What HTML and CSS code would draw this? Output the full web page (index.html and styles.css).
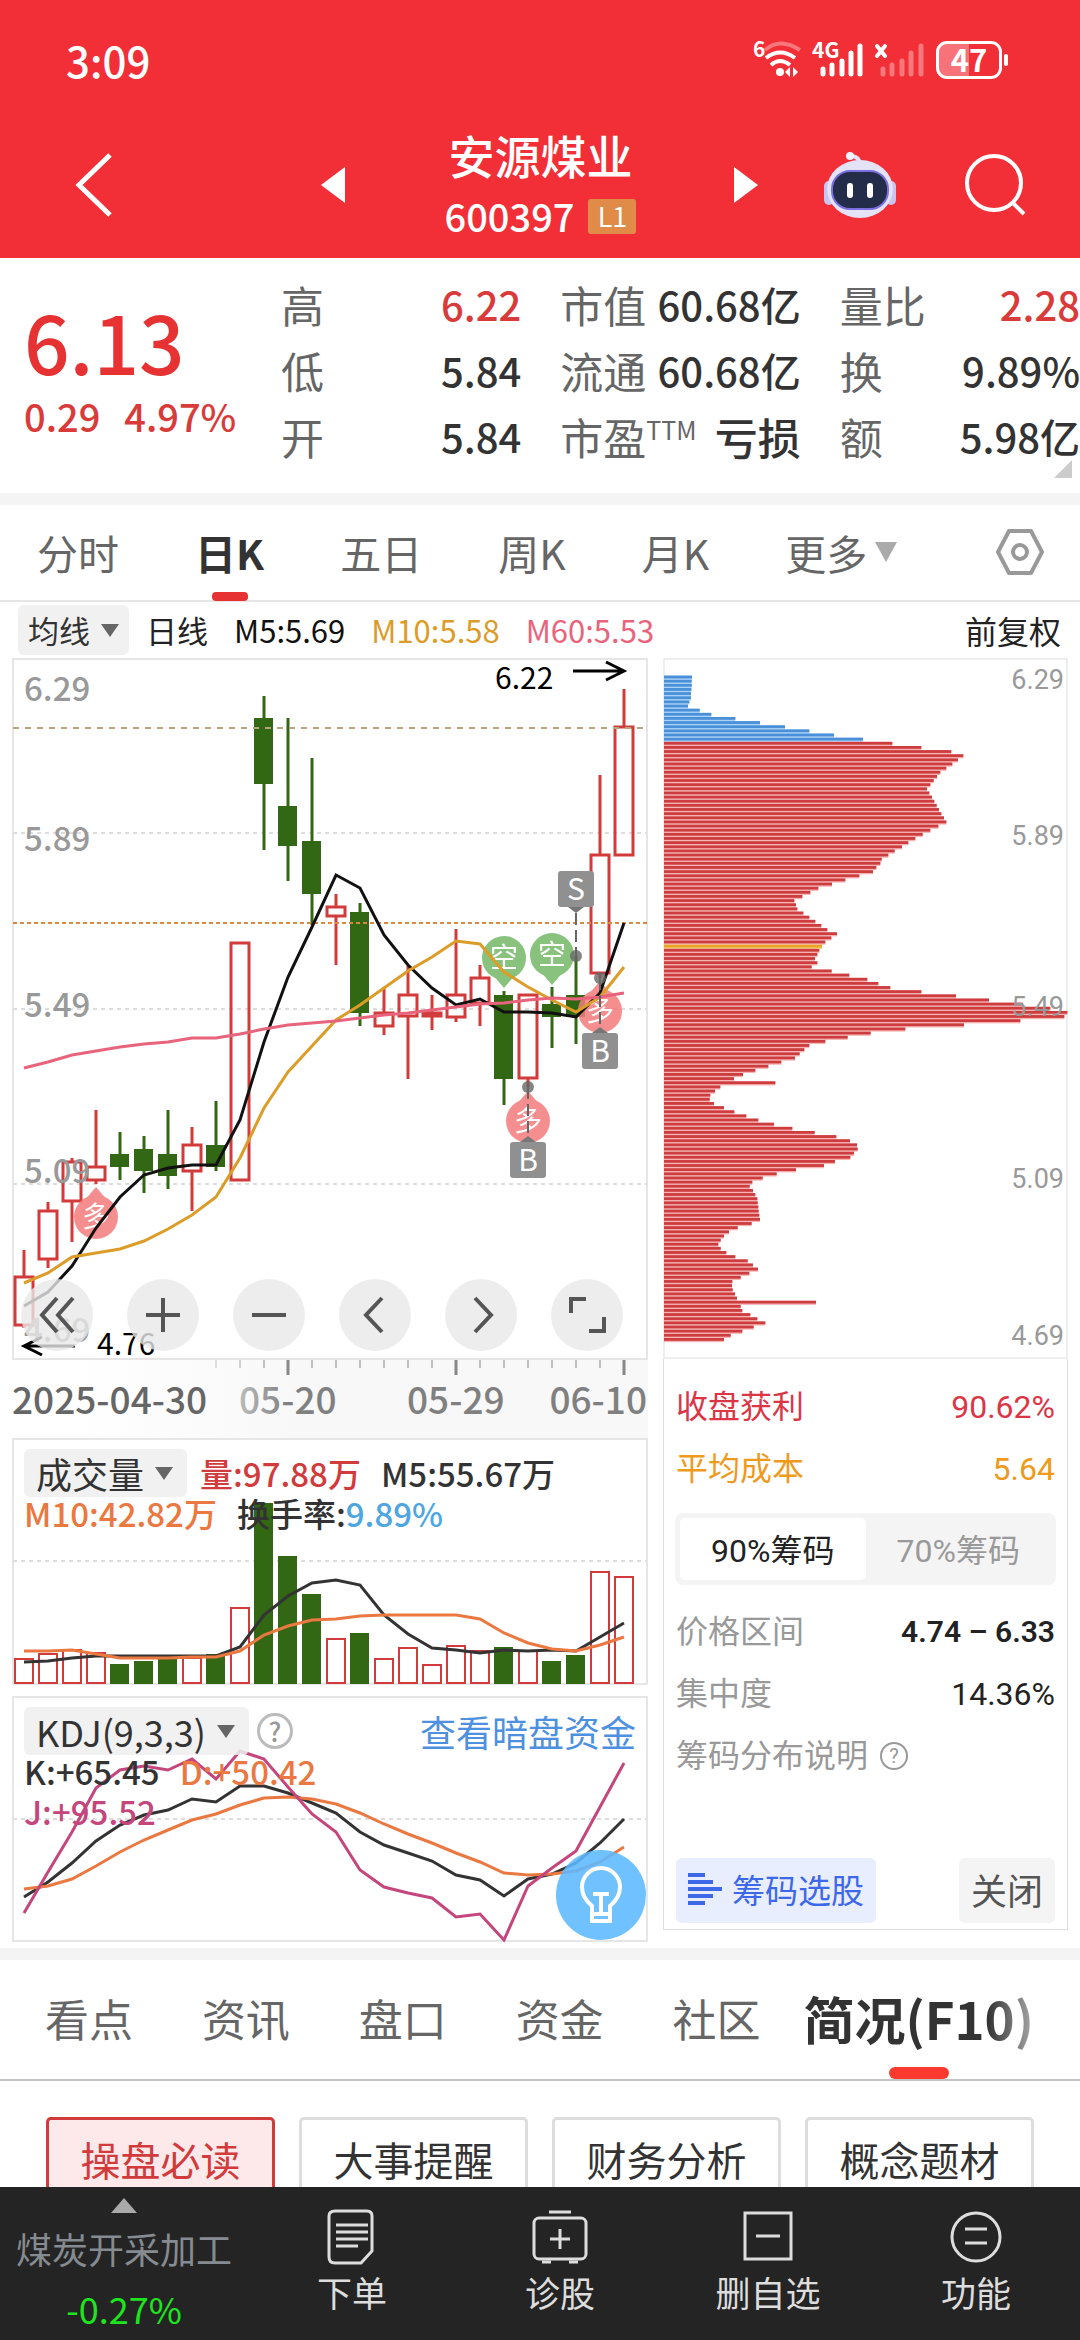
FILE: index.html
```html
<!DOCTYPE html>
<html lang="zh-CN">
<head>
<meta charset="utf-8">
<meta name="viewport" content="width=device-width">
<title>安源煤业 600397</title>
<link rel="stylesheet" href="styles.css">
</head>
<body>
<div class="app">
  <header class="top">
    <div class="status">
      <span class="clock">3:09</span>
      <div class="signals">
        <svg width="48" height="38" viewBox="755 41 48 38" fill="none" stroke="#fff" stroke-width="4">
          <text x="754" y="57" class="tiny">6</text>
          <path d="M766 50q15-13 35 0" stroke-opacity=".35"/>
          <path d="M767 58q14-11 29 0M772 65q9-8 19 0"/>
          <circle cx="781" cy="72" r="4" fill="#fff" stroke="none"/>
          <path d="M786 72l5-5v10zM799 72l-5-5v10z" fill="#fff" stroke="none"/>
        </svg>
        <svg width="52" height="38" viewBox="811 41 52 38" stroke="#fff" stroke-width="5" stroke-linecap="round">
          <text x="811" y="58" class="tiny">4G</text>
          <path d="M822 69v5M831 65v9M841 61v13M850 53v21M859 46v28"/>
        </svg>
        <svg width="52" height="38" viewBox="874 41 52 38" stroke="#fff" stroke-width="5" stroke-linecap="round">
          <path d="M877 46l8 10M885 46l-8 10" stroke-width="4"/>
          <path d="M883 69v5M892 65v9M902 61v13M911 53v21M921 46v28" stroke-opacity=".35"/>
        </svg>
        <div class="battery"><span>47</span></div>
      </div>
    </div>
    <nav class="title-bar">
      <button class="icon-btn" aria-label="返回"><svg width="42" height="68" viewBox="0 0 42 68"><path d="M37 4L6 34l31 30" fill="none" stroke="#fff" stroke-width="5"/></svg></button>
      <button class="icon-btn step" aria-label="上一只"><svg width="24" height="36"><path d="M24 0v36L0 18z" fill="#fff"/></svg></button>
      <div class="title">
        <h1>安源煤业</h1>
        <p><span>600397</span><span class="level">L1</span></p>
      </div>
      <button class="icon-btn step" aria-label="下一只"><svg width="24" height="36"><path d="M0 0v36l24-18z" fill="#fff"/></svg></button>
      <button class="icon-btn" aria-label="智能助手">
        <svg width="72" height="68" viewBox="0 0 72 68">
          <path d="M36 14q0-8-8-9" fill="none" stroke="#e6e4fa" stroke-width="4"/><circle cx="26" cy="5" r="4" fill="#f4f3ff"/>
          <rect x="0" y="30" width="10" height="24" rx="5" fill="#c9c5f0"/><rect x="62" y="30" width="10" height="24" rx="5" fill="#c9c5f0"/>
          <ellipse cx="36" cy="38" rx="33" ry="29" fill="#e4e2f7"/>
          <rect x="8" y="20" width="56" height="38" rx="18" fill="#232c48" stroke="#7b6fe0" stroke-width="2"/>
          <path d="M26 35v9M46 35v9" stroke="#fff" stroke-width="6" stroke-linecap="round"/>
        </svg>
      </button>
      <button class="icon-btn" aria-label="搜索"><svg width="62" height="62" viewBox="0 0 62 62" fill="none" stroke="#fff" stroke-width="4"><circle cx="30" cy="29" r="27"/><path d="M48 48l12 12"/></svg></button>
    </nav>
  </header>

  <main class="content">
    <section class="quote">
      <div class="price"><strong>6.13</strong><p><span>0.29</span><span>4.97%</span></p></div>
      <dl>
        <div><dt>高</dt><dd class="up">6.22</dd></div>
        <div><dt>低</dt><dd>5.84</dd></div>
        <div><dt>开</dt><dd>5.84</dd></div>
      </dl>
      <dl>
        <div><dt>市值</dt><dd>60.68亿</dd></div>
        <div><dt>流通</dt><dd>60.68亿</dd></div>
        <div><dt>市盈<sup>TTM</sup></dt><dd class="word">亏损</dd></div>
      </dl>
      <dl>
        <div><dt>量比</dt><dd class="up">2.28</dd></div>
        <div><dt>换</dt><dd>9.89%</dd></div>
        <div><dt>额</dt><dd>5.98亿</dd></div>
      </dl>
      <svg class="corner" width="18" height="18"><path d="M18 0v18H0z" fill="#ccc"/></svg>
    </section>

    <nav class="periods">
      <button>分时</button>
      <button class="on">日K</button>
      <button>五日</button>
      <button>周K</button>
      <button>月K</button>
      <button class="more">更多<svg width="22" height="20"><path d="M0 0h22L11 20z" fill="#aaa"/></svg></button>
      <button class="gear" aria-label="设置"><svg width="50" height="48" viewBox="0 0 50 48" fill="none" stroke="#999" stroke-width="4" stroke-linejoin="round"><path d="M14 3h22l11 21-11 21H14L3 24z"/><circle cx="25" cy="24" r="7"/></svg></button>
    </nav>

    <div class="ma-row">
      <button class="pill small">均线<svg width="18" height="13"><path d="M0 0h18L9 13z" fill="#666"/></svg></button>
      <span>日线</span>
      <span class="m5">M5:5.69</span>
      <span class="m10">M10:5.58</span>
      <span class="m60">M60:5.53</span>
      <button class="adjust">前复权</button>
    </div>

    <section class="charts">
      <div class="chart-col">
        <div class="plot">
          <svg id="kline" class="plot-svg" viewBox="12 658 636 702"></svg>
          <div class="zoom-bar">
            <button aria-label="收起"><svg viewBox="0 0 40 40"><path d="M20 3L5 20l15 17M36 3L21 20l15 17"/></svg></button>
            <button aria-label="放大"><svg viewBox="0 0 40 40"><path d="M3 20h34M20 3v34"/></svg></button>
            <button aria-label="缩小"><svg viewBox="0 0 40 40"><path d="M3 20h34"/></svg></button>
            <button aria-label="左移"><svg viewBox="0 0 40 40"><path d="M27 3L11 20l16 17"/></svg></button>
            <button aria-label="右移"><svg viewBox="0 0 40 40"><path d="M14 3l16 17-16 17"/></svg></button>
            <button aria-label="全屏"><svg viewBox="0 0 40 40"><path d="M4 18V4h15M37 22v14H22"/></svg></button>
          </div>
        </div>
        <svg id="axis" class="plot-svg" viewBox="12 1360 636 78"></svg>
        <div class="plot volume">
          <svg id="volume" class="plot-svg" viewBox="12 1438 636 247"></svg>
          <div class="legend">
            <div class="legend-row"><button class="pill">成交量<svg width="18" height="13"><path d="M0 0h18L9 13z" fill="#666"/></svg></button><span class="vol">量:97.88万</span><span>M5:55.67万</span></div>
            <div class="legend-row"><span class="orange">M10:42.82万</span><span>换手率:<b>9.89%</b></span></div>
          </div>
        </div>
        <div class="plot kdj">
          <svg id="kdj" class="plot-svg" viewBox="12 1696 636 246"></svg>
          <div class="legend">
            <div class="legend-row"><button class="pill">KDJ(9,3,3)<svg width="18" height="13"><path d="M0 0h18L9 13z" fill="#666"/></svg></button><button class="help big" aria-label="指标说明">?</button><a class="fund" href="#fund">查看暗盘资金</a></div>
            <div class="legend-row"><span>K:+65.45</span><span class="orange">D:+50.42</span></div>
            <div class="legend-row"><span class="purple">J:+95.52</span></div>
          </div>
          <button class="bulb" aria-label="提示"><svg width="44" height="60" viewBox="0 0 44 60" fill="none" stroke="#fff" stroke-width="4"><path d="M13 41C7 36 3 30 3 22a19 19 0 0 1 38 0c0 8-4 14-10 19v15H13zM13 49h18M14 29h16M22 29v20"/></svg></button>
        </div>
      </div>

      <aside class="chips">
        <svg id="chips" class="plot-svg" viewBox="663 658 405 701"></svg>
        <div class="chip-info">
          <p class="row profit"><span>收盘获利</span><span>90.62%</span></p>
          <p class="row cost"><span>平均成本</span><span>5.64</span></p>
          <div class="segment"><button class="on">90%筹码</button><button>70%筹码</button></div>
          <p class="row"><span>价格区间</span><b>4.74 – 6.33</b></p>
          <p class="row"><span>集中度</span><em>14.36%</em></p>
          <p class="row note"><span>筹码分布说明</span><button class="help" aria-label="筹码分布说明">?</button></p>
          <div class="actions">
            <button class="pick"><svg width="34" height="34" viewBox="0 0 34 34" stroke="#3d68e8" stroke-width="4"><path d="M0 3h17M0 10h25M0 17h34M0 24h25M0 31h17"/></svg>筹码选股</button>
            <button class="close">关闭</button>
          </div>
        </div>
      </aside>
    </section>

    <nav class="sections">
      <button>看点</button><button>资讯</button><button>盘口</button><button>资金</button><button>社区</button><button class="on">简况(F10)</button>
    </nav>
    <div class="topics">
      <button class="on">操盘必读</button><button>大事提醒</button><button>财务分析</button><button>概念题材</button>
    </div>
  </main>

  <footer class="tools">
    <a class="sector" href="#sector"><svg width="26" height="15"><path d="M0 15h26L13 0z" fill="#aaa"/></svg><span>煤炭开采加工</span><b>-0.27%</b></a>
    <button><svg viewBox="0 0 56 56"><path d="M11 2h32q5 0 5 5v35l-11 12H11q-6 0-6-6V7q0-5 6-5zM12 16h32M12 23h32M12 30h32M12 37h22"/></svg>下单</button>
    <button><svg viewBox="0 0 56 56"><rect x="2" y="9" width="52" height="41" rx="5"/><path d="M17 3h22M28 20v20M18 30h20M10 53h9M37 53h9"/></svg>诊股</button>
    <button><svg viewBox="0 0 56 56"><path d="M5 4h46v46H5zM16 27h24"/></svg>删自选</button>
    <button><svg viewBox="0 0 56 56"><circle cx="28" cy="28" r="24"/><path d="M17 20h22M17 34h22"/></svg>功能</button>
  </footer>
</div>
<script src="charts.js"></script>
</body>
</html>
```
FILE: styles.css
```css
* { box-sizing: border-box; margin: 0; }
body { font-family: "Noto Sans CJK SC", "Noto Sans", sans-serif; color: #333; background: #fff; }
button { font: inherit; color: inherit; background: none; border: 0; padding: 0; }
a { color: inherit; text-decoration: none; }
svg { display: block; flex: none; }
p { display: flex; }
.app { height: 100vh; display: flex; flex-direction: column; }

/* header */
.top { background: #f22f37; color: #fff; flex: none; }
.status { display: flex; justify-content: space-between; align-items: center; height: 116px; padding: 3px 78px 0 66px; }
.status svg { overflow: visible; }
.clock { font-size: 42px; font-weight: 500; }
.signals { display: flex; align-items: center; gap: 10px; }
.tiny { font: 700 21px "Noto Sans CJK SC", sans-serif; fill: #fff; stroke: none; }
.battery { position: relative; width: 66px; height: 38px; border: 3px solid #fff; border-radius: 11px; background: linear-gradient(90deg, #f77379 50%, transparent 50%); font-size: 31px; font-weight: 700; line-height: 30px; text-align: center; }
.battery::after { content: ""; position: absolute; right: -9px; top: 10px; width: 4px; height: 12px; border-radius: 2px; background: #fff; }
.title-bar { display: grid; grid-template-columns: 242px 38px 1fr 96px 140px 62px; align-items: center; height: 142px; padding: 0 54px 4px 73px; }
.icon-btn { justify-self: start; }
.icon-btn.step { margin-left: 6px; }
.title { justify-self: center; text-align: center; }
h1 { font-size: 46px; font-weight: 500; line-height: 62px; }
.title p { align-items: center; justify-content: center; gap: 14px; font-size: 38px; font-weight: 500; line-height: 62px; }
.level { width: 48px; height: 35px; border-radius: 3px; background: #e08c48; font-size: 27px; font-weight: 400; line-height: 34px; }

/* quote */
.content { flex: 1; min-height: 0; overflow: hidden; }
.quote { position: relative; display: grid; grid-template-columns: 218px 1fr 1fr 1fr; gap: 39px; padding: 13px 0 24px 24px; border-bottom: 12px solid #f4f4f4; }
.price { color: #e63232; padding-top: 10px; }
.price strong { display: block; font-size: 80px; line-height: 118px; font-weight: 500; }
.price p { gap: 24px; font-size: 38px; font-weight: 500; line-height: 34px; color: #d93a3a; }
.quote dl > div { display: flex; justify-content: space-between; align-items: center; height: 66px; white-space: nowrap; }
.quote dt { font-size: 43px; line-height: 66px; color: #666; }
.quote dd { font-size: 40px; font-weight: 500; line-height: 66px; color: #333; }
.quote .word { font-size: 43px; }
.quote .up { color: #d93a3a; }
.quote sup { font-size: 25px; line-height: 20px; }
.corner { position: absolute; right: 8px; bottom: 15px; }

/* period tabs */
.periods { display: flex; gap: 76px; align-items: center; height: 97px; padding: 0 35px 0 37px; border-bottom: 2px solid #e6e6e6; font-size: 41px; line-height: 60px; color: #666; }
.periods button { height: 96px; display: flex; align-items: center; padding-bottom: 2px; }
.periods .more { gap: 8px; }
.periods .gear { margin-left: auto; }
.periods .on { position: relative; color: #333; font-weight: 700; }
.periods .on::after { content: ""; position: absolute; left: 50%; bottom: 0; width: 36px; height: 9px; margin-left: -18px; border-radius: 4px; background: #e63232; }
.ma-row { display: flex; align-items: center; gap: 26px; height: 56px; padding: 0 19px 0 18px; font-size: 31px; line-height: 50px; color: #222; }
.ma-row .pill { margin-right: -9px; }
.m5 { color: #111; }
.m10 { color: #dc9c28; }
.m60 { color: #e8647c; }
.adjust { margin-left: auto; font-size: 32px; }
.pill { display: flex; align-items: center; gap: 11px; height: 48px; padding: 0 14px 0 12px; border-radius: 6px; background: rgba(238, 238, 238, .85); font-size: 36px; line-height: 48px; color: #333; }
.pill.small { height: 50px; padding: 0 10px; font-size: 31px; }

/* charts */
.charts { display: grid; grid-template-columns: 636fr 405fr; gap: 15px; align-items: start; padding: 0 12px 6px; border-bottom: 12px solid #f4f4f4; }
.plot { position: relative; }
.plot-svg { width: 100%; height: auto; }
.plot-svg text { font-family: "Noto Sans CJK SC", sans-serif; }
.kdj { margin-top: 11px; }
.zoom-bar { position: absolute; left: 9px; right: 25px; bottom: 9px; display: flex; justify-content: space-between; }
.zoom-bar button { width: 72px; height: 72px; border-radius: 50%; background: rgba(232, 232, 232, .8); display: grid; place-items: center; }
.zoom-bar svg { width: 40px; height: 40px; fill: none; stroke: #555; stroke-width: 4; }
.legend { position: absolute; inset: 11px 12px auto; font-size: 33px; font-weight: 500; line-height: 40px; white-space: nowrap; }
.legend-row { display: flex; align-items: center; gap: 20px; }
.legend-row:first-child { margin-bottom: -4px; }
.legend b { font-weight: 500; color: #4da6e0; }
.legend .vol { color: #d13b3b; margin-left: -7px; }
.legend .orange { color: #ea7840; }
.legend .purple { color: #c4467c; }
.legend .pill, .fund { font-weight: 400; }
.kdj .help { margin-left: -12px; }
.fund { margin-left: auto; font-size: 36px; color: #4d90e0; }
.help { width: 28px; height: 28px; border: 2px solid #999; border-radius: 50%; font-size: 20px; line-height: 22px; color: #999; }
.help.big { width: 36px; height: 36px; border: 3px solid #bbb; font-size: 26px; line-height: 28px; }
.bulb { position: absolute; right: 2px; bottom: 2px; width: 90px; height: 90px; border-radius: 50%; background: rgba(92, 184, 255, .88); display: grid; place-items: center; }

/* chip distribution */
.chips { font-family: Roboto, "Noto Sans CJK SC", sans-serif; font-size: 32px; }
.plot-svg .chip-label { font-family: Roboto, sans-serif; }
.chip-info { border: 1px solid #ddd; border-top: 0; padding: 17px 11px 6px; height: 571px; display: flex; flex-direction: column; }
.row { justify-content: space-between; align-items: center; line-height: 62px; padding: 0 1px; color: #999; }
.row b { color: #222; font-size: 30px; font-weight: 600; }
.row em { color: #222; font-style: normal; }
.profit { color: #dc3545; }
.cost { color: #ee9a1c; }
.note { justify-content: flex-start; gap: 12px; }
.segment { display: flex; flex: none; height: 72px; margin: 13px 0 16px; padding: 5px; border-radius: 8px; background: #f4f4f4; color: #999; }
.segment button { flex: 1; padding-bottom: 3px; border-radius: 5px; }
.segment .on { background: #fff; color: #222; }
.actions { display: flex; justify-content: space-between; margin-top: auto; padding: 0 1px; }
.actions button { display: flex; align-items: center; height: 65px; padding: 0 12px 3px; border-radius: 6px; }
.pick { gap: 10px; background: #e8eefe; color: #3d68e8; font-size: 33px; }
.close { background: #f4f4f4; color: #555; font-size: 36px; }

/* lower tabs */
.sections { display: flex; align-items: center; height: 121px; padding: 0 46px 0 45px; justify-content: space-between; border-bottom: 2px solid #c4c4c4; font-size: 44px; color: #666; }
.sections button { height: 119px; padding-bottom: 4px; }
.sections .on { position: relative; margin-left: -26px; font-size: 51px; font-weight: 700; color: transparent; background: linear-gradient(90deg, #333 80%, #aaa) text; }
.sections .on::after { content: ""; position: absolute; left: 50%; bottom: 0; width: 60px; height: 12px; margin-left: -30px; border-radius: 6px; background: #fb3a2f; }
.topics { display: grid; grid-template-columns: repeat(4, 1fr); gap: 24px; padding: 36px 46px; }
.topics button { height: 86px; padding-bottom: 2px; border: 3px solid #ddd; border-radius: 5px; font-size: 40px; color: #333; }
.topics .on { border-color: #d13b3b; background: #fde9e9; color: #d13b3b; }

/* bottom bar */
.tools { flex: none; display: grid; grid-template-columns: 248fr repeat(4, 208fr); height: 153px; background: #242424; color: #ddd; font-size: 35px; line-height: 42px; text-align: center; }
.tools > * { display: flex; flex-direction: column; align-items: center; }
.tools button { padding-top: 22px; gap: 6px; }
.tools button svg { width: 56px; height: 56px; fill: none; stroke: #ddd; stroke-width: 3; }
.sector { padding-top: 11px; color: #858b90; font-size: 36px; }
.sector span { margin-top: 14px; }
.sector b { margin-top: 18px; font-weight: 400; color: #1ee61e; }
```
FILE: charts.js
```js
const RED = '#d13b3b', GREEN = '#326714';
const x = i => 24 + i * 24;
const line = (ys, color) =>
  `<polyline fill="none" stroke="${color}" stroke-width="3" points="${ys.map((y, i) => `${x(i)},${y}`).join(' ')}"/>`;
const grid = (y, color = '#ddd', w = 2, dash = '4 4') =>
  `<path d="M13 ${y}H647" stroke="${color}" stroke-width="${w}" stroke-dasharray="${dash}"/>`;
const frame = (y, h) => `<rect x="13" y="${y}" width="634" height="${h}" fill="none" stroke="#e6e6e6" stroke-width="2"/>`;
const label = (s, px, y, size, color, extra = '') =>
  `<text x="${px}" y="${y}" font-size="${size}" fill="${color}" ${extra}>${s}</text>`;
const put = (id, html) => { document.getElementById(id).innerHTML = html; };

// up?, high, body top, body bottom, low
const candles = [
  [1,1250,1277,1325,1328],[1,1202,1211,1259,1268],[1,1158,1162,1201,1242],[1,1110,1167,1180,1184],
  [0,1132,1154,1167,1180],[0,1136,1149,1171,1193],[0,1110,1154,1176,1189],[1,1127,1145,1171,1211],
  [0,1101,1145,1167,1171],[1,943,943,1180,1180],[0,696,718,784,850],[0,718,806,846,881],
  [0,758,841,894,925],[1,894,907,916,965],[0,903,912,1013,1026],[1,987,1013,1026,1035],
  [1,966,995,1016,1079],[1,995,1013,1016,1030],[1,929,995,1017,1022],[1,965,978,1003,1026],
  [0,991,995,1079,1105],[1,995,995,1078,1087],[0,987,1004,1017,1048],[0,956,995,1017,1044],
  [1,775,855,973,978],[1,689,727,855,855]
];
const candle = ([up, hi, top, bot, lo], i) => up
  ? `<path d="M${x(i)} ${hi}V${top}M${x(i)} ${bot}V${lo}M${x(i) - 9} ${top}h18V${bot}h-18z" fill="none" stroke="${RED}" stroke-width="3"/>`
  : `<path d="M${x(i)} ${hi}V${lo}" stroke="${GREEN}" stroke-width="3"/><rect x="${x(i) - 10}" y="${top}" width="19" height="${bot - top}" fill="${GREEN}"/>`;

const ma5 = [1306,1292,1266,1228,1197,1175,1168,1165,1165,1120,1042,977,927,875,888,935,965,988,1005,999,1012,1012,1013,1017,993,923];
const ma10 = [1283,1273,1257,1253,1249,1241,1229,1215,1197,1158,1108,1072,1046,1020,1005,988,971,957,941,944,972,987,1000,1012,997,967];
const ma60 = [1068,1062,1055,1051,1047,1044,1042,1038,1038,1034,1029,1025,1023,1021,1018,1015,1013,1010,1007,1004,1003,1000,998,999,997,993];

const pin = (cx, cy, ch, up) => {
  const color = up ? '#f47c7c' : '#74b866';
  const t = up ? -1 : 1;
  return `<g opacity=".85"><circle cx="${cx}" cy="${cy}" r="22" fill="${color}"/><path d="M${cx - 12} ${cy + t * 16}L${cx} ${cy + t * 30}L${cx + 12} ${cy + t * 16}z" fill="${color}"/>` +
    label(ch, cx, cy + 10, 28, '#fff', 'text-anchor="middle"') + '</g>';
};
const badge = (cx, y, ch, below) =>
  `<path d="M${cx - 8} ${below ? y : y + 36}h16l-8 ${below ? -6 : 6}z" fill="#777"/><rect x="${cx - 18}" y="${y}" width="36" height="36" rx="3" fill="#909090"/>` +
  label(ch, cx, y + 29, 30, '#fff', 'text-anchor="middle"');
const leader = (cx, a, b) => `<path d="M${cx} ${a}V${b}" stroke="#666" stroke-width="2" stroke-dasharray="12 5"/>`;
const dot = (cx, cy) => `<circle cx="${cx}" cy="${cy}" r="6" fill="#666" fill-opacity=".8"/>`;

put('kline',
  frame(659, 700) + grid(833) + grid(1009) + grid(1184) +
  candles.map(candle).join('') +
  grid(728, '#b5a57c', 2, '6 6') + grid(923, '#dd8840', 2, '4 3') +
  [['6.29', 701], ['5.89', 851], ['5.49', 1017], ['5.09', 1183], ['4.69', 1342]].map(([s, y]) => label(s, 24, y, 33, '#999', 'font-weight="500"')).join('') +
  pin(504, 958, '空', 0) + pin(552, 955, '空', 0) + pin(600, 1011, '多', 1) + pin(528, 1121, '多', 1) + pin(96, 1217, '多', 1) +
  line(ma5, '#111') + line(ma10, '#dc9c28') + line(ma60, '#e8647c') +
  dot(576, 956) + dot(600, 978) + dot(528, 1087) +
  leader(576, 913, 956) + leader(600, 978, 1030) + leader(528, 1087, 1140) +
  badge(576, 871, 'S', 0) + badge(600, 1033, 'B', 1) + badge(528, 1142, 'B', 1) +
  label('6.22', 495, 689, 30, '#000') + label('4.76', 97, 1355, 30, '#000') +
  '<path d="M573 671h50M606 662l18 9-18 9M75 1346H25M42 1337l-18 9 18 9" fill="none" stroke="#000" stroke-width="3"/>');

let ticks = '';
for (let i = 8; i < 26; i++) {
  const major = [11, 18, 25].includes(i);
  ticks += `<path d="M${x(i)} 1360v${major ? 15 : 8}" stroke="#888" stroke-width="${major ? 3 : 1}" opacity="${Math.min(1, (i - 6) / 4)}"/>`;
}
put('axis',
  '<defs><linearGradient id="fade"><stop offset=".1" stop-color="#fff"/><stop offset=".45" stop-color="#f8f8f8"/></linearGradient>' +
  '<linearGradient id="date"><stop offset="0" stop-color="#bbb"/><stop offset=".5" stop-color="#808080"/></linearGradient></defs>' +
  '<rect x="12" y="1360" width="636" height="78" fill="url(#fade)"/>' + ticks +
  label('2025-04-30', 12, 1414, 37, '#666', 'font-weight="500"') + label('05-20', 239, 1414, 37, 'url(#date)', 'font-weight="500"') +
  label('05-29', 407, 1414, 37, '#808080', 'font-weight="500"') + label('06-10', 647, 1414, 37, '#808080', 'font-weight="500" text-anchor="end"'));

const volTop = [1659,1654,1650,1653,1664,1661,1658,1658,1654,1608,1503,1556,1594,1639,1633,1659,1648,1665,1646,1651,1647,1651,1661,1655,1572,1577];
const vol5 = [1662,1661,1658,1656,1656,1656,1656,1656,1656,1647,1615,1596,1583,1580,1585,1615,1634,1648,1650,1653,1650,1651,1650,1651,1637,1623];
const vol10 = [1651,1651,1650,1654,1658,1658,1658,1657,1657,1651,1635,1626,1620,1619,1616,1615,1615,1615,1615,1619,1633,1643,1649,1651,1645,1637];
put('volume',
  frame(1439, 245) + grid(1561) +
  volTop.map((y, i) => candles[i][0]
    ? `<rect x="${x(i) - 9}" y="${y}" width="18" height="${1683 - y}" fill="#fff" stroke="${RED}" stroke-width="2"/>`
    : `<rect x="${x(i) - 10}" y="${y}" width="19" height="${1684 - y}" fill="${GREEN}"/>`).join('') +
  line(vol5, '#333') + line(vol10, '#ea7840'));

const k = [1897,1882,1863,1841,1825,1815,1810,1799,1802,1786,1786,1793,1803,1813,1832,1845,1853,1861,1875,1880,1896,1879,1874,1863,1843,1819];
const d = [1889,1886,1879,1866,1852,1840,1830,1820,1814,1805,1798,1797,1799,1804,1813,1824,1834,1843,1853,1862,1873,1875,1874,1871,1862,1847];
const j = [1913,1872,1832,1788,1770,1766,1770,1759,1779,1751,1759,1787,1814,1832,1870,1887,1893,1898,1917,1914,1940,1886,1868,1851,1807,1763];
put('kdj', frame(1697, 244) + grid(1819) + line(k, '#333') + line(d, '#ea7840') + line(j, '#c4467c'));

// chips held at each price step, highest price first
const chips = [
  84,83,83,82,81,81,76,72,107,142,214,288,363,436,510,597,685,772,862,898,882,865,847,829,819,809,799,789,796,804,811,818,825,832,840,847,
  823,799,776,754,733,714,692,673,653,649,637,627,586,544,504,463,439,415,391,396,400,418,436,454,472,490,519,502,484,474,466,460,453,460,443,
  503,556,610,643,679,772,876,975,1076,1159,1210,1201,1069,900,724,620,551,484,436,421,407,393,352,313,274,237,210,334,169,153,139,137,150,180,
  211,247,283,330,385,452,517,558,579,581,570,559,513,480,396,338,296,265,257,267,274,280,281,283,284,286,288,263,221,195,180,170,163,170,187,
  214,251,267,282,256,230,205,204,206,213,219,456,230,235,259,280,304,269,235,200,180
];
const chipColor = i => i < 16 ? '#4a90d9' : i === 65 ? '#eba32c' : '#cd3c3e';
const chipLight = i => i < 16 ? '#a9d2f6' : i === 65 ? '#f4d070' : '#f6b4b2';
put('chips',
  '<rect x="664" y="659" width="403" height="699" fill="none" stroke="#ddd"/>' +
  chips.map((v, i) => {
    const y = 675.6 + i * 4.14, w = v / 3;
    return `<rect x="664" y="${y}" width="${w}" height="4.14" fill="${chipLight(i)}"/><rect x="664" y="${y}" width="${w}" height="2.8" fill="${chipColor(i)}"/>`;
  }).join('') +
  [['6.29', 689], ['5.89', 845], ['5.49', 1016], ['5.09', 1188], ['4.69', 1345]].map(([s, y]) => label(s, 1064, y, 27, '#999', 'class="chip-label" text-anchor="end"')).join(''));
```
